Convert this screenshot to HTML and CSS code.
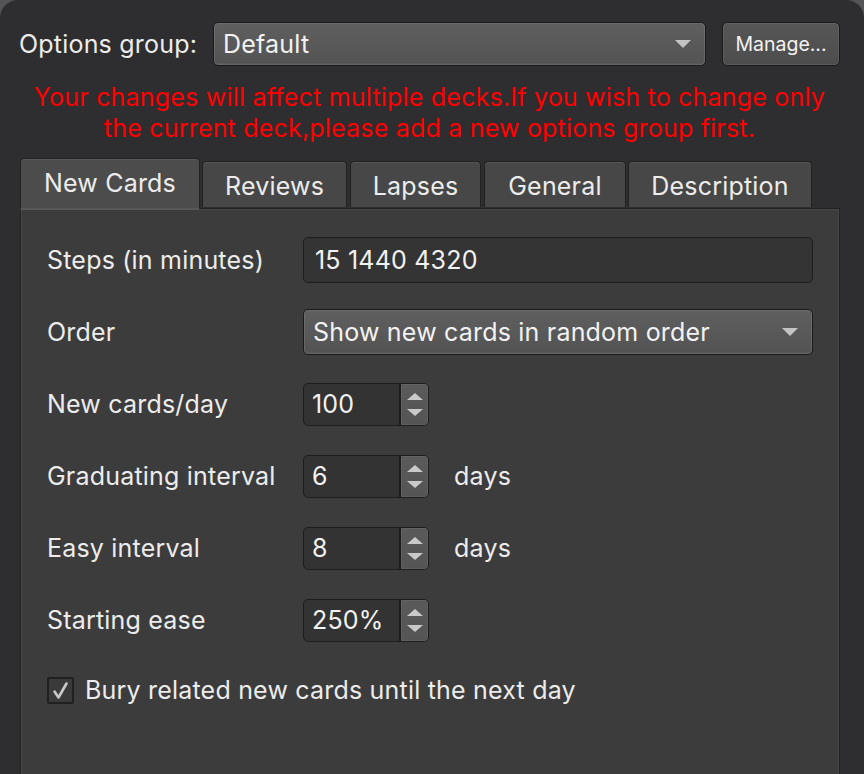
FILE: index.html
```html
<!DOCTYPE html>
<html>
<head>
<meta charset="utf-8">
<link rel="stylesheet" href="styles.css">
</head>
<body>
<div class="window">
  <div class="toprow">
    <span class="grouplabel">Options group:</span>
    <div class="combo combo-group"><span>Default</span><span class="caret"></span></div>
    <div class="button">Manage...</div>
  </div>
  <div class="warning">Your changes will affect multiple decks.If you wish to change only<br>the current deck,please add a new options group first.</div>
  <div class="tabs">
    <div class="tab selected">New Cards</div>
    <div class="tab t-reviews">Reviews</div>
    <div class="tab t-lapses">Lapses</div>
    <div class="tab t-general">General</div>
    <div class="tab t-desc">Description</div>
  </div>
  <div class="pane">
    <div class="row">
      <span class="label">Steps (in minutes)</span>
      <div class="input wide">15 1440 4320</div>
    </div>
    <div class="row">
      <span class="label">Order</span>
      <div class="combo wide"><span>Show new cards in random order</span><span class="caret"></span></div>
    </div>
    <div class="row">
      <span class="label">New cards/day</span>
      <div class="spin"><span class="val">100</span><span class="arrows"><span class="up"></span><span class="down"></span></span></div>
    </div>
    <div class="row">
      <span class="label">Graduating interval</span>
      <div class="spin"><span class="val">6</span><span class="arrows"><span class="up"></span><span class="down"></span></span></div>
      <span class="unit">days</span>
    </div>
    <div class="row">
      <span class="label">Easy interval</span>
      <div class="spin"><span class="val">8</span><span class="arrows"><span class="up"></span><span class="down"></span></span></div>
      <span class="unit">days</span>
    </div>
    <div class="row">
      <span class="label">Starting ease</span>
      <div class="spin"><span class="val">250%</span><span class="arrows"><span class="up"></span><span class="down"></span></span></div>
    </div>
    <div class="checkrow">
      <span class="checkbox"><svg width="23" height="23" viewBox="0 0 23 23"><path d="M5.5 12.5 L9.5 18.5 L17.5 4.5" fill="none" stroke="#c9c9c9" stroke-width="2.6" stroke-linecap="round" stroke-linejoin="round"/></svg></span>
      <span class="checklabel">Bury related new cards until the next day</span>
    </div>
  </div>
</div>
</body>
</html>
```

FILE: styles.css
```css
* { box-sizing: border-box; }
html, body { margin: 0; padding: 0; }
body {
  background: #555557;
  font-family: Inter, "Noto Sans", "Liberation Sans", sans-serif;
  font-size: 25px;
  letter-spacing: 0.2px;
  color: #ececec;
  width: 864px;
  height: 774px;
  overflow: hidden;
}
.window {
  background: #2e2e30;
  border-radius: 18px 18px 0 0;
  height: 774px;
  padding: 22px 24px 0 19px;
}
.toprow {
  display: flex;
  align-items: center;
  height: 44px;
}
.grouplabel {
  width: 194px;
  flex: none;
}
.combo {
  display: flex;
  align-items: center;
  justify-content: space-between;
  background: linear-gradient(#5f5f5f, #535353);
  border: 1px solid #1b1b1b;
  border-radius: 5px;
  box-shadow: inset 0 0 0 1px rgba(255,255,255,0.07), inset 0 -1px 0 1px rgba(255,255,255,0.04);
  padding: 0 14px 0 9px;
  color: #f2f2f2;
}
.combo-group {
  width: 493px;
  height: 44px;
  flex: none;
}
.caret {
  width: 0; height: 0;
  border-left: 8px solid transparent;
  border-right: 8px solid transparent;
  border-top: 8px solid #c4c4c4;
}
.button {
  margin-left: 16px;
  width: 119px;
  height: 44px;
  display: flex;
  align-items: center;
  justify-content: center;
  background: linear-gradient(#565656, #4d4d4d);
  border: 1px solid #1b1b1b;
  border-radius: 5px;
  box-shadow: inset 0 0 0 1px rgba(255,255,255,0.07);
  font-size: 19.5px;
  letter-spacing: 0;
  color: #f2f2f2;
}
.warning {
  margin-top: 16px;
  color: #ff0000;
  text-align: center;
  font-size: 25px;
  line-height: 31px;
}
.tabs {
  margin-top: 14px;
  margin-left: 1px;
  display: flex;
  align-items: flex-end;
  height: 52px;
  position: relative;
  z-index: 1;
}
.tab {
  height: 46px;
  margin-bottom: 3px;
  display: flex;
  align-items: center;
  justify-content: center;
  background: #474747;
  border: 1px solid #222;
  border-bottom: none;
  border-radius: 4px 4px 0 0;
  box-shadow: inset 0 1px 0 rgba(255,255,255,0.08);
  margin-right: 2px;
  padding-top: 3px;
}
.tab.selected {
  width: 180px;
  height: 52px;
  margin-bottom: 0;
  background: #4c4c4c;
  padding-top: 0;
  padding-bottom: 2px;
  border-bottom: 2px solid #575757;
}
.t-reviews { width: 145px; margin-right: 3px; }
.t-lapses { width: 131px; margin-right: 3px; }
.t-general { width: 142px; margin-right: 2px; }
.t-desc { width: 184px; }
.pane {
  margin-top: -2px;
  margin-left: 1px;
  width: 820px;
  height: 600px;
  background: #3c3c3c;
  border: 1px solid #222;
  box-shadow: inset 0 0 0 1px #484848;
  padding: 28px 26px 0 26px;
}
.row {
  display: flex;
  align-items: center;
  height: 46px;
  margin-bottom: 26px;
}
.label {
  width: 256px;
  flex: none;
}
.input {
  height: 46px;
  background: #343434;
  border: 1px solid #1d1d1d;
  border-radius: 5px;
  display: flex;
  align-items: center;
  padding-left: 11px;
  color: #f2f2f2;
}
.wide { width: 510px; height: 46px; flex: none; }
.spin {
  width: 126px;
  height: 43px;
  flex: none;
  display: flex;
  background: #333333;
  border: 1px solid #1d1d1d;
  border-radius: 5px;
  overflow: hidden;
}
.val {
  flex: 1;
  display: flex;
  align-items: center;
  padding-left: 8px;
  color: #f2f2f2;
}
.arrows {
  width: 29px;
  background: linear-gradient(#5a5a5a, #555);
  border-left: 2px solid #1d1d1d;
  box-shadow: inset 0 0 0 1px rgba(255,255,255,0.06);
  display: flex;
  flex-direction: column;
  align-items: center;
  justify-content: center;
  gap: 9px;
}
.up {
  width: 0; height: 0;
  border-left: 8px solid transparent;
  border-right: 8px solid transparent;
  border-bottom: 7px solid #c9c9c9;
}
.down {
  width: 0; height: 0;
  border-left: 8px solid transparent;
  border-right: 8px solid transparent;
  border-top: 7px solid #c9c9c9;
}
.unit {
  margin-left: 25px;
}
.checkrow {
  display: flex;
  align-items: center;
  margin-top: 33px;
  height: 28px;
}
.checkbox {
  width: 27px;
  height: 27px;
  border: 2px solid #202020;
  border-radius: 2px;
  background: #3a3a3a;
  display: flex;
  align-items: center;
  justify-content: center;
  flex: none;
}
.checkbox svg { display: block; }
.checklabel {
  margin-left: 11px;
}
```
